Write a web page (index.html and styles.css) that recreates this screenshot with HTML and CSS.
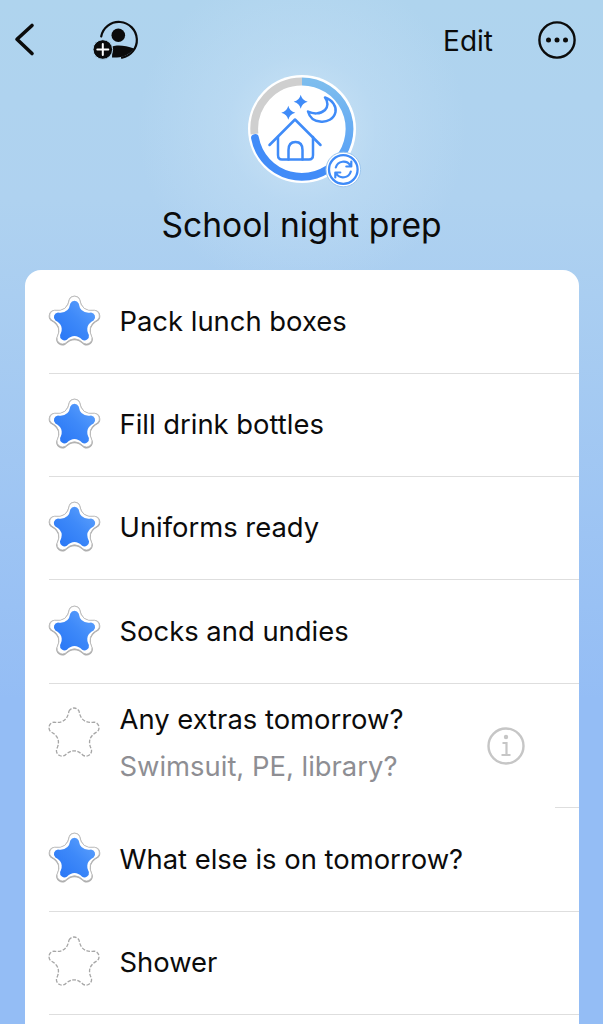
FILE: index.html
```html
<!DOCTYPE html>
<html lang="en">
<head>
<meta charset="utf-8">
<title>School night prep</title>
<link rel="stylesheet" href="styles.css">
</head>
<body>
<svg class="defs" width="0" height="0" aria-hidden="true">
  <defs>
    <linearGradient id="starFill" x1="0" y1="1" x2="1" y2="0">
      <stop offset="0" stop-color="#2674f5"/>
      <stop offset="0.55" stop-color="#3f8af9"/>
      <stop offset="1" stop-color="#62a4fd"/>
    </linearGradient>
    <path id="starShape" d="M-4.98,-22.32 A5.5,5.5 0 0 1 4.98,-22.32 Q7.05,-9.71 19.69,-11.64 A5.5,5.5 0 0 1 22.77,-2.16 Q11.41,3.71 17.15,15.13 A5.5,5.5 0 0 1 9.09,20.99 Q0,12 -9.09,20.99 A5.5,5.5 0 0 1 -17.15,15.13 Q-11.41,3.71 -22.77,-2.16 A5.5,5.5 0 0 1 -19.69,-11.64 Q-7.05,-9.71 -4.98,-22.32Z"/>
    <g id="starOn">
      <use href="#starShape" transform="translate(27.5,28.6) scale(1.03)" fill="#8f8f8f" stroke="#b0b0b0" stroke-width="1"/>
      <use href="#starShape" transform="translate(27.5,28) scale(1.015)" fill="#fff" stroke="#b8b8b8" stroke-width="0.8"/>
      <use href="#starShape" transform="translate(27.5,28.2) scale(.84)" fill="url(#starFill)"/>
    </g>
    <g id="starOff">
      <use href="#starShape" transform="translate(27,28) scale(1.02)" fill="none" stroke="#a6a6a6" stroke-width="1.3" stroke-dasharray="3.6 1.5"/>
    </g>
  </defs>
</svg>

<nav class="nav">
  <div class="nav-left">
    <svg class="icon-back" viewBox="0 0 24 36" width="24" height="36">
      <path d="M20 3.5 L5 17.300 L20 31.500" fill="none" stroke="#0b0b0b" stroke-width="3.600" stroke-linecap="round" stroke-linejoin="round"/>
    </svg>
    <svg class="icon-person" viewBox="90 19 50 44" width="50" height="44">
      <path d="M101.200 36.500 A18 18 0 1 1 122 57.700" fill="none" stroke="#0b0b0b" stroke-width="2.200" stroke-linecap="round"/>
      <circle cx="118.300" cy="35.300" r="6.800" fill="#0b0b0b"/>
      <path d="M112.500 46.500 C117 44.500 126 45.500 134 48.500 C130 54 124 57.500 117 57.500 L112 57.500 Z" fill="#0b0b0b"/>
      <circle cx="102.800" cy="49.500" r="9.800" fill="#0b0b0b" stroke="#afd4ee" stroke-width="1"/>
      <path d="M102.800 44 V55 M97.300 49.500 H108.300" stroke="#fff" stroke-width="2" stroke-linecap="round"/>
    </svg>
  </div>
  <div class="nav-right">
    <span class="edit">Edit</span>
    <svg class="icon-more" viewBox="0 0 40 40" width="40" height="40">
      <circle cx="20" cy="20" r="17.600" fill="none" stroke="#0b0b0b" stroke-width="2.400"/>
      <circle cx="11.500" cy="20" r="2.500" fill="#0b0b0b"/>
      <circle cx="20" cy="20" r="2.500" fill="#0b0b0b"/>
      <circle cx="28.500" cy="20" r="2.500" fill="#0b0b0b"/>
    </svg>
  </div>
</nav>

<header class="hero">
  <svg class="hero-icon" viewBox="242 69 120 120" width="120" height="120">
    <defs>
      <linearGradient id="ringA" x1="0" y1="0" x2="0" y2="1">
        <stop offset="0" stop-color="#7dbdee"/>
        <stop offset="1" stop-color="#5aa2f6"/>
      </linearGradient>
    </defs>
    <circle cx="302" cy="129" r="54" fill="#fff"/>
    <path d="M254.500 134 A47.500 47.500 0 0 1 302 81.500" fill="none" stroke="#cfcfcf" stroke-width="7.800"/>
    <path d="M302 81.500 A47.500 47.500 0 0 1 338 160" fill="none" stroke="url(#ringA)" stroke-width="7.800"/>
    <path d="M338 160 A47.500 47.500 0 0 1 255 138" fill="none" stroke="#428cf8" stroke-width="7.800" stroke-linecap="round"/>
    <g fill="none" stroke="#3f8bf8" stroke-width="2.500" stroke-linecap="round" stroke-linejoin="round">
      <path d="M269.500 145 L295 119.500 L320.500 145"/>
      <path d="M278 137 V155 Q278 159.500 282 159.500 H309 Q313 159.500 313 155 V137"/>
      <path d="M288.500 159.500 V150 Q288.500 142 295.500 142 Q302.500 142 302.500 150 V159.500"/>
      <path d="M325 97.500 C333 100 336.500 107 335.500 112 C334 119 327 122.500 320 121.500 C314 121 309.500 117 308 111.500 C313 114 320 114.500 325 110 C328 107 328.500 102 325 97.500 Z"/>
    </g>
    <g fill="#3f8bf8">
      <path d="M300.700 94.700 Q302 100.400 307.700 101.700 Q302 103 300.700 108.700 Q299.400 103 293.700 101.700 Q299.400 100.400 300.700 94.700 Z"/>
      <path d="M288.300 105.700 Q289.600 111.400 295.300 112.700 Q289.600 114 288.300 119.700 Q287 114 281.300 112.700 Q287 111.400 288.300 105.700 Z"/>
    </g>
    <circle cx="343.300" cy="169.500" r="17.300" fill="#fff" stroke="#9cc6ee" stroke-width="1"/>
    <circle cx="343.300" cy="169.500" r="14.300" fill="#fff" stroke="#3f8bf8" stroke-width="2.300"/>
    <g fill="none" stroke="#3f8bf8" stroke-width="2.200" stroke-linecap="round" stroke-linejoin="round">
      <path d="M335.800 167.500 A8 8 0 0 1 350.300 165.500 M351.300 161.500 V166.500 H346.300"/>
      <path d="M350.800 171.500 A8 8 0 0 1 336.300 173.500 M335.300 177.500 V172.500 H340.300"/>
    </g>
  </svg>
  <h1 class="title">School night prep</h1>
</header>

<main class="card">
  <div class="row">
    <svg class="star" viewBox="0 0 56 56" width="56" height="56"><use href="#starOn"/></svg>
    <div class="row-text"><span class="label">Pack lunch boxes</span></div>
  </div>
  <div class="sep"></div>
  <div class="row">
    <svg class="star" viewBox="0 0 56 56" width="56" height="56"><use href="#starOn"/></svg>
    <div class="row-text"><span class="label">Fill drink bottles</span></div>
  </div>
  <div class="sep"></div>
  <div class="row">
    <svg class="star" viewBox="0 0 56 56" width="56" height="56"><use href="#starOn"/></svg>
    <div class="row-text"><span class="label">Uniforms ready</span></div>
  </div>
  <div class="sep"></div>
  <div class="row">
    <svg class="star" viewBox="0 0 56 56" width="56" height="56"><use href="#starOn"/></svg>
    <div class="row-text"><span class="label">Socks and undies</span></div>
  </div>
  <div class="sep"></div>
  <div class="row row-tall">
    <svg class="star" viewBox="0 0 56 56" width="56" height="56"><use href="#starOff"/></svg>
    <div class="row-text">
      <span class="label">Any extras tomorrow?</span>
      <span class="note">Swimsuit, PE, library?</span>
    </div>
    <svg class="icon-info" viewBox="0 0 38 38" width="38" height="38">
      <circle cx="19" cy="19" r="17.500" fill="none" stroke="#c6c6c6" stroke-width="2.400"/>
      <circle cx="19" cy="10" r="2.200" fill="#c6c6c6"/>
      <path d="M15.500 16 H19.500 V28 M14.500 28 H23.500" fill="none" stroke="#c6c6c6" stroke-width="2.200"/>
    </svg>
  </div>
  <div class="sep sep-short"></div>
  <div class="row">
    <svg class="star" viewBox="0 0 56 56" width="56" height="56"><use href="#starOn"/></svg>
    <div class="row-text"><span class="label">What else is on tomorrow?</span></div>
  </div>
  <div class="sep"></div>
  <div class="row">
    <svg class="star" viewBox="0 0 56 56" width="56" height="56"><use href="#starOff"/></svg>
    <div class="row-text"><span class="label">Shower</span></div>
  </div>
  <div class="sep"></div>
  <div class="row"></div>
</main>
</body>
</html>
```

FILE: styles.css
```css
* { box-sizing: border-box; }

html, body {
  margin: 0;
  height: 1024px;
  overflow: hidden;
}

body {
  font-family: "Inter", "Liberation Sans", sans-serif;
  color: #0b0b0b;
  background:
    radial-gradient(circle 165px at 302px 129px, rgba(214, 234, 248, 0.75) 0, rgba(200, 226, 246, 0.4) 45%, rgba(176, 213, 238, 0) 100%),
    linear-gradient(180deg, #afd4ee 0, #afd2f0 200px, #94bdf5 700px, #94bdf5 100%);
}

.defs { position: absolute; }

.nav {
  display: flex;
  justify-content: space-between;
  align-items: center;
  height: 69px;
  padding: 11px 26px 0 12px;
}

.nav-left, .nav-right { display: flex; align-items: center; }
.icon-person { margin-left: 54px; margin-top: 2px; }
.nav-right { gap: 44px; }
.edit { font-size: 28px; line-height: 36px; padding-top: 1px; }
.icon-back, .icon-person, .icon-more { display: block; flex: none; }

.hero {
  display: flex;
  flex-direction: column;
  align-items: center;
}

.hero-icon { display: block; margin-left: 1px; }

.title {
  margin: 14px 0 0;
  font-size: 33.6px;
  line-height: 44px;
  font-weight: 400;
}

.card {
  margin: 23px 24px 0 25px;
  padding-top: 0.4px;
  background: #fff;
  border-radius: 16px 16px 0 0;
}

.row {
  display: flex;
  align-items: center;
  height: 102.33px;
  padding-left: 22px;
  padding-right: 54px;
}

.row-tall { height: 123.6px; }
.row-tall .star { align-self: flex-start; margin-top: 22px; }
.star { flex: none; display: block; }

.row-text {
  flex: 1;
  display: flex;
  flex-direction: column;
  gap: 10px;
  margin-left: 16.5px;
  padding-bottom: 0.5px;
}

.row-tall .row-text { padding: 0 0 6px; }

.label { font-size: 27.4px; line-height: 37px; }
.note { font-size: 27.4px; line-height: 37px; color: #8e8e93; }
.icon-info { flex: none; display: block; }

.sep { height: 1px; margin-left: 24px; background: #dedede; }
.sep-short { margin-left: 530px; }
```
